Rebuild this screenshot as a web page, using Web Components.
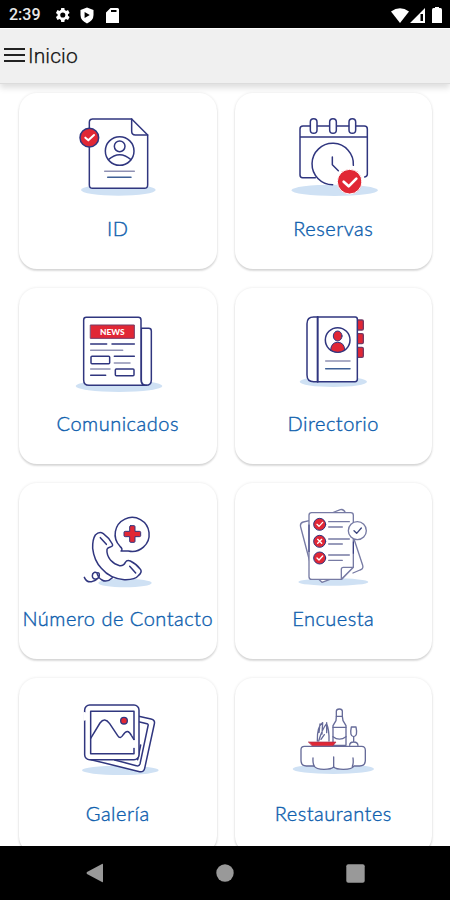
<!DOCTYPE html>
<html lang="es">
<head>
<meta charset="utf-8">
<meta name="viewport" content="width=device-width, initial-scale=1">
<title>Inicio</title>
<style>
  html, body { margin: 0; height: 100%; background: #fff; }
  body { font-family: Roboto, sans-serif; overflow: hidden; }
</style>
</head>
<body>
<home-screen>
  <status-bar slot="status">2:39</status-bar>
  <app-header slot="header">Inicio</app-header>
  <menu-card icon="id">ID</menu-card>
  <menu-card icon="calendar">Reservas</menu-card>
  <menu-card icon="news">Comunicados</menu-card>
  <menu-card icon="directory">Directorio</menu-card>
  <menu-card icon="phone">Número de Contacto</menu-card>
  <menu-card icon="survey">Encuesta</menu-card>
  <menu-card icon="gallery">Galería</menu-card>
  <menu-card icon="restaurant">Restaurantes</menu-card>
  <nav-bar slot="nav"></nav-bar>
</home-screen>

<script>
// Each drawing uses a 315x300 box, shown at a third of that size
const icons = {
  id: `
    <ellipse class="shade" cx="160" cy="255" rx="112" ry="17"/>
    <path class="paper" d="M82 42H200L248 90V240Q248 250 238 250H83Q73 250 73 240V52Q73 42 83 42Z"/>
    <path d="M200 42V79Q200 90 211 90H248"/>
    <circle cx="164" cy="138" r="43"/>
    <circle cx="164" cy="124" r="16"/>
    <path d="M130 164Q164 134 198 164"/>
    <path class="soft" d="M119 199H208"/>
    <path d="M128 217H198" stroke="#3f6096"/>
    <circle class="red" cx="73" cy="98" r="28"/>
    <path class="tick" d="M61 98L70 106L87 90"/>`,
  calendar: `
    <ellipse class="shade" cx="164" cy="256" rx="130" ry="17"/>
    <path class="paper" stroke="none" d="M60 63H262V218H60Z"/>
    <path d="M106 218H68Q60 218 60 210V72Q60 63 69 63H90M112 63H148M170 63H206M228 63H253Q262 63 262 72V208Q262 215 254 216M60 96H262"/>
    <rect x="91" y="41" width="20" height="44" rx="10"/>
    <rect x="149" y="41" width="20" height="44" rx="10"/>
    <rect x="207" y="41" width="20" height="44" rx="10"/>
    <path class="paper" d="M158 239A62 62 0 1 1 220 181"/>
    <path d="M157 156V179L175 197"/>
    <circle cx="209" cy="230" r="37" fill="#e12735" stroke="#fff" stroke-width="3"/>
    <path class="tick" stroke-width="8" d="M191 230L206 244L229 221"/>`,
  news: `
    <ellipse class="shade" cx="162" cy="258" rx="130" ry="18"/>
    <path class="paper" d="M229 85H251Q259 85 259 93V240Q259 256 243 256Q229 256 229 240Z"/>
    <path class="paper" d="M244 256H72Q56 256 56 240V60Q56 52 64 52H220Q228 52 228 60V240Q228 253 240 256"/>
    <rect x="77" y="75" width="131" height="40" fill="#e12735" stroke="#743a64" stroke-width="3"/>
    <text x="142" y="104" text-anchor="middle" textLength="74" lengthAdjust="spacingAndGlyphs">NEWS</text>
    <path d="M77 132H125M141 132H208M148 169H208M77 226H122"/>
    <path class="soft" d="M77 151H173M148 189H195M77 207H135"/>
    <rect x="78" y="169" width="56" height="22" rx="3"/>
    <rect x="151" y="207" width="56" height="20" rx="3"/>`,
  directory: `
    <ellipse class="shade" cx="160" cy="245" rx="101" ry="16"/>
    <g fill="#e12735" stroke="#743a64" stroke-width="4">
      <rect x="230" y="60" width="20" height="30" rx="4"/>
      <rect x="230" y="101" width="20" height="30" rx="4"/>
      <rect x="230" y="142" width="20" height="30" rx="4"/>
    </g>
    <path class="paper" d="M101 51H226Q232 51 232 58V238Q232 245 225 245H101Q81 245 81 225V71Q81 51 101 51Z"/>
    <path stroke-width="6" d="M113 51V245"/>
    <circle cx="173" cy="120" r="37"/>
    <g class="red" stroke-width="3">
      <ellipse cx="173" cy="108" rx="13" ry="15"/>
      <path d="M152 150Q153 127 173 127Q193 127 194 150Q173 164 152 150Z"/>
    </g>
    <path class="soft" d="M137 183H210"/>
    <path d="M137 206H210" stroke="#3f6096"/>`,
  phone: `
    <ellipse class="shade" cx="180" cy="249" rx="80" ry="13"/>
    <path class="paper" d="M91 105Q103 93 115 101Q132 113 142 132Q145 139 136 141Q128 143 126 148Q124 164 137 181Q149 194 164 197Q176 198 181 187Q186 179 196 183Q215 192 227 209Q232 217 220 227Q210 240 178 239Q136 237 109 205Q87 181 83 145Q82 119 91 105Z"/>
    <path d="M106 113L124 133M194 199L212 219"/>
    <path d="M142 233Q126 249 111 240Q98 232 96 219Q89 213 83 222Q79 235 91 238Q103 236 103 226Q103 216 96 219M58 232Q66 250 83 244Q97 241 102 229"/>
    <path class="paper" d="M165 139A51 51 0 1 1 190 153L168 153Q175 148 165 139Z"/>
    <path class="red" stroke-width="3" d="M197 77H207Q210 77 210 80V94H223Q227 94 227 97V107Q227 110 223 110H210V124Q210 127 207 127H197Q194 127 194 124V110H181Q177 110 177 107V97Q177 94 181 94H194V80Q194 77 197 77Z"/>`,
  survey: `
    <ellipse class="shade" cx="160" cy="246" rx="105" ry="11"/>
    <g stroke="#777ba4" stroke-width="4">
      <path class="paper" d="M88 62L70 66Q59 69 62 81L99 222L126 247L150 238M155 39L181 29Q191 26 196 38L248 196Q251 207 240 210L219 219"/>
      <path class="paper" d="M95 38H212Q220 38 220 46V201L185 238H95Q87 238 87 230V46Q87 38 95 38Z"/>
      <path class="paper" d="M184 238V208Q184 202 190 202H220Z"/>
      <path d="M146 65H208M146 81H187M146 117H208M146 132H187M146 165H208M146 181H187"/>
      <circle class="paper" cx="232" cy="92" r="27"/>
      <path d="M222 92L230 100L244 84" stroke="#3d477f"/>
    </g>
    <path d="M87 75V155M220 126V160" stroke-width="3"/>
    <g class="red" stroke-width="3">
      <circle cx="119" cy="73" r="18"/>
      <circle cx="119" cy="124" r="18"/>
      <circle cx="119" cy="174" r="18"/>
    </g>
    <path class="tick" stroke-width="4" d="M111 73L117 79L128 67M113 118L125 130M125 118L113 130M111 174L117 180L128 168"/>`,
  gallery: `
    <ellipse class="shade" cx="166" cy="241" rx="115" ry="14"/>
    <path class="paper" d="M221 79L258 87Q271 90 268 102L239 235Q236 247 224 245L78 209"/>
    <path d="M221 95L246 101Q251 103 249 108L225 222Q222 230 214 227L149 210M227 165L218 209"/>
    <rect class="paper" x="59" y="45" width="163" height="164" rx="15"/>
    <path d="M59 70V88" stroke="#fff" stroke-width="8"/>
    <rect x="77" y="64" width="130" height="127"/>
    <path d="M77 145L105 99Q119 80 134 101L158 137Q166 149 174 135Q188 113 199 136L207 149"/>
    <path d="M207 154V170" stroke="#fff" stroke-width="8"/>
    <circle class="red" cx="177" cy="92" r="10" stroke-width="4"/>`,
  restaurant: `
    <ellipse class="shade" cx="160" cy="237" rx="122" ry="15"/>
    <g stroke="#666b99" stroke-width="4">
      <path class="paper" d="M73 169H245Q256 169 256 181V211Q256 228 239 228H222Q217 238 190 238Q168 238 161 231Q154 238 132 238Q108 238 102 228H79Q63 228 63 211V179Q63 169 73 169Z"/>
      <path d="M99 204Q98 221 103 229M161 201V232M219 204Q221 221 217 229"/>
      <path class="paper" d="M169 79V64Q169 57 178 57Q187 57 187 64V79L189 92L198 107V166H159V107L168 92Z"/>
      <path d="M169 79H187M159 112H198M159 140Q178 155 198 140"/>
      <path d="M214 111H228Q234 139 221 140Q208 139 214 111ZM221 140V154M209 166Q209 156 221 156Q233 156 234 166"/>
      <path d="M112 153Q111 110 128 98L126 132M116 153Q127 116 140 101Q148 120 147 153M123 148L133 134M120 102L117 127M140 98V128"/>
    </g>
    <path d="M86 156H168L159 167H97Z" fill="#e12735" stroke="#a92d48" stroke-width="2"/>`
};

// Vertical start of the drawing inside its card
const offsets = { phone: -15, survey: -15 };

class HomeScreen extends HTMLElement {
  connectedCallback() {
    this.attachShadow({ mode: 'open' });
    this.shadowRoot.innerHTML = `
      <style>
        :host {
          display: flex;
          flex-direction: column;
          width: 100%;
          height: 100vh;
          overflow: hidden;
        }
        main {
          flex: 1;
          min-height: 0;
          overflow: hidden;
          box-sizing: border-box;
          padding: 9px 18px 0 19px;
          display: grid;
          grid-template-columns: 1fr 1fr;
          grid-auto-rows: 176px;
          align-content: start;
          gap: 19px 18px;
        }
        ::slotted(menu-card:nth-of-type(even)) { --icon-shift: 1px; }
      </style>
      <slot name="status"></slot>
      <slot name="header"></slot>
      <main><slot></slot></main>
      <slot name="nav"></slot>
    `;
  }
}

class StatusBar extends HTMLElement {
  connectedCallback() {
    this.attachShadow({ mode: 'open' });
    this.shadowRoot.innerHTML = `
      <style>
        :host {
          display: flex;
          align-items: center;
          flex: none;
          box-sizing: border-box;
          height: 28px;
          padding: 2px 8px 0 9px;
          background: #000;
          color: #e8e8e8;
          font: 500 16px/20px Roboto, sans-serif;
        }
        .time { width: 45px; }
        .left, .right { display: flex; align-items: center; }
        .left { gap: 10px; }
        .right { margin-left: auto; }
        svg { display: block; fill: #fff; }
      </style>
      <span class="time"><slot></slot></span>
      <div class="left">
        <svg width="16" height="16" viewBox="2 2 20 20"><path d="M19.4 13a7.500 7.500 0 0 0 0-2l2.100-1.600-2-3.500-2.500 1a8 8 0 0 0-1.700-1L15 3.200h-4L10.600 5.900a8 8 0 0 0-1.700 1l-2.500-1-2 3.500L6.500 11a7.500 7.500 0 0 0 0 2l-2.100 1.600 2 3.500 2.500-1a8 8 0 0 0 1.700 1l.4 2.700h4l.3-2.700a8 8 0 0 0 1.700-1l2.500 1 2-3.500ZM13 15.200a3.200 3.200 0 1 1 0-6.400 3.200 3.200 0 0 1 0 6.400Z"/></svg>
        <svg width="14" height="17" viewBox="0 0 14 17"><path fill-rule="evenodd" d="M7 .5L13.500 3V8Q13.500 13.500 7 16.500Q.5 13.500 .5 8V3ZM4.600 5V11L9.800 8Z"/></svg>
        <svg width="13" height="15" viewBox="0 0 13 15" style="margin-left:2px"><path fill-rule="evenodd" d="M4.500 0H11.500Q13 0 13 1.500V15H0V4.500ZM5 2V4H10.500V2Z"/></svg>
      </div>
      <div class="right">
        <svg width="18" height="15" viewBox="0 0 18 15"><path d="M0 3.500Q9-3 18 3.500L9 15Z"/></svg>
        <svg width="15" height="15" viewBox="0 0 15 15" style="margin-left:1px"><path fill-rule="evenodd" d="M15 0V15H0ZM10.500 6V13H13V6Z"/></svg>
        <svg width="10" height="16" viewBox="0 0 10 16" style="margin-left:7px"><path d="M3 0H7V1H8.500Q10 1 10 3V16H0V3Q0 1 1.500 1H3Z"/></svg>
      </div>
    `;
  }
}

class AppHeader extends HTMLElement {
  connectedCallback() {
    this.attachShadow({ mode: 'open' });
    this.shadowRoot.innerHTML = `
      <style>
        :host {
          display: flex;
          align-items: center;
          flex: none;
          box-sizing: border-box;
          height: 56px;
          padding: 0 4px 0 4px;
          background: #f0f0f0;
          border-top: 1px solid #fff;
          border-bottom: 1px solid #dcdcdc;
          box-shadow: 0 4px 6px rgba(0, 0, 0, 0.13);
          color: #111;
          font: 300 21px/24px Roboto, sans-serif;
          letter-spacing: 0.1px;
          -webkit-text-stroke: 0.25px #111;
        }
        button {
          display: flex;
          padding: 0;
          margin: 0 3px 2px 0;
          border: none;
          background: none;
        }
        svg { stroke: #222; stroke-width: 2; }
      </style>
      <button aria-label="Menú">
        <svg width="21" height="16" viewBox="0 0 21 16"><path d="M0 2H21M0 8H21M0 14H21"/></svg>
      </button>
      <span><slot></slot></span>
    `;
  }
}

class MenuCard extends HTMLElement {
  connectedCallback() {
    const name = this.getAttribute('icon');
    this.attachShadow({ mode: 'open' });
    this.shadowRoot.innerHTML = `
      <style>
        :host {
          display: flex;
          flex-direction: column;
          align-items: center;
          min-width: 0;
          box-sizing: border-box;
          padding-top: 12px;
          border-radius: 18px;
          background: #fff;
          box-shadow: 0 0 3px rgba(0, 0, 0, 0.1), 0 2px 2px rgba(0, 0, 0, 0.13);
          cursor: pointer;
        }
        svg {
          display: block;
          flex: none;
          margin-right: var(--icon-shift, 0);
          fill: none;
          stroke: #30367f;
          stroke-width: 4.5;
          stroke-linecap: round;
          stroke-linejoin: round;
        }
        .shade { fill: #cfe1f4; stroke: none; }
        .paper { fill: #fff; }
        .soft { stroke: #8f91b3; }
        .red { fill: #e12735; }
        .tick { stroke: #fff; }
        path.tick:not([stroke-width]) { stroke-width: 6; }
        text {
          fill: #fff;
          stroke: none;
          font: 900 25px Lato, sans-serif;
        }
        .label {
          margin-top: 11px;
          color: #0f5fae;
          font: 300 20px/24px Lato, sans-serif;
          letter-spacing: 0.5px;
          -webkit-text-stroke: 0.4px #0f5fae;
          white-space: nowrap;
        }
      </style>
      <svg width="105" height="100" viewBox="0 ${offsets[name] || 0} 315 300" aria-hidden="true">${icons[name]}</svg>
      <span class="label"><slot></slot></span>
    `;
  }
}

class NavBar extends HTMLElement {
  connectedCallback() {
    this.attachShadow({ mode: 'open' });
    this.shadowRoot.innerHTML = `
      <style>
        :host {
          display: flex;
          align-items: center;
          justify-content: space-between;
          flex: none;
          box-sizing: border-box;
          height: 54px;
          padding: 0 85px 0 86px;
          background: #000;
          position: relative;
        }
        svg { fill: #999; }
      </style>
      <svg width="18" height="20" viewBox="0 0 18 20"><path d="M16 1Q17 0 17 2V18Q17 20 16 19L1 11Q0 10 1 9Z"/></svg>
      <svg width="18" height="18" viewBox="0 0 18 18"><circle cx="9" cy="9" r="8.700"/></svg>
      <svg width="19" height="19" viewBox="0 0 19 19"><rect x=".3" y=".3" width="18.400" height="18.400" rx="2"/></svg>
    `;
  }
}

customElements.define('home-screen', HomeScreen);
customElements.define('status-bar', StatusBar);
customElements.define('app-header', AppHeader);
customElements.define('menu-card', MenuCard);
customElements.define('nav-bar', NavBar);
</script>
</body>
</html>
